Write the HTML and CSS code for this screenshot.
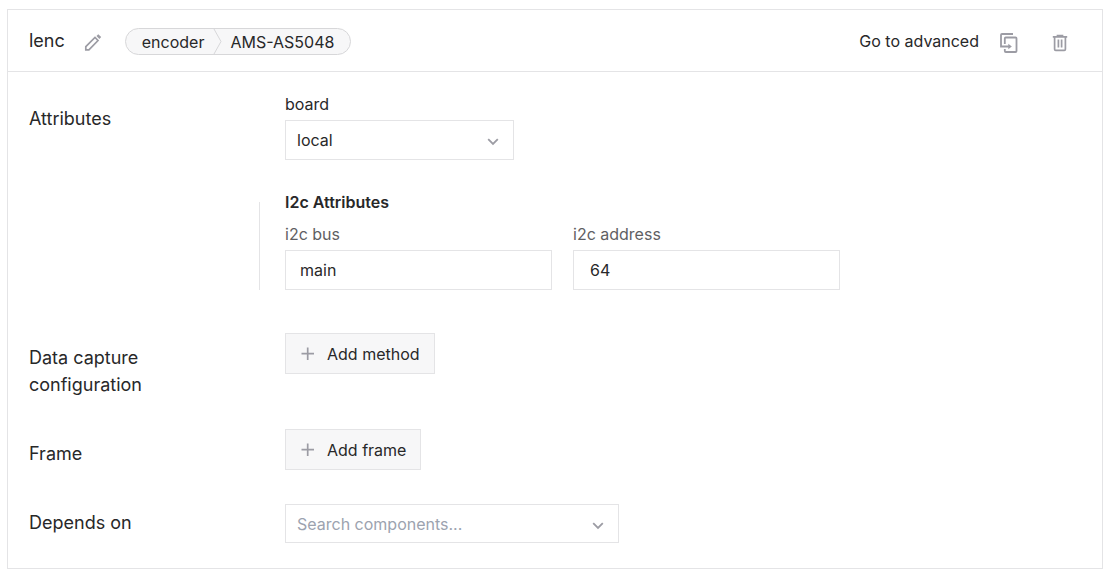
FILE: index.html
```html
<!DOCTYPE html>
<html lang="en">
<head>
<meta charset="utf-8">
<meta name="viewport" content="width=device-width, initial-scale=1">
<title>lenc</title>
<link rel="stylesheet" href="styles.css">
</head>
<body>
<main class="card">
  <header class="card-header">
    <h1 class="name">lenc</h1>
    <button class="icon-button edit" type="button" aria-label="Rename">
      <svg width="18" height="18" viewBox="0 0 18 18" fill="none" stroke="currentColor" stroke-width="1.700"><path d="M1.800 16.800V13.600L11 4.500L14 7.500L4.900 16.800Z"/><path d="M12.500 3L14.300 1.200L17.200 4.100L15.400 5.900Z" fill="currentColor" stroke="none"/></svg>
    </button>
    <div class="type">
      <span class="type-name">encoder</span>
      <svg class="type-divider" width="9" height="25" viewBox="0 0 9 25" fill="none" stroke="currentColor"><path d="M1 0L8 12.500L1 25"/></svg>
      <span class="type-model">AMS-AS5048</span>
    </div>
    <div class="actions">
      <button class="text-button" type="button">Go to advanced</button>
      <button class="icon-button" type="button" aria-label="Duplicate">
        <svg width="20" height="22" viewBox="0 0 20 22" fill="none" stroke="currentColor" stroke-width="1.800"><path d="M14 2H3Q2 2 2 3V14.500H10"/><path d="M5.800 12V6.500Q5.800 5.500 6.800 5.500H16.500Q17.500 5.500 17.500 6.500V19Q17.500 20 16.500 20H6.800Q5.800 20 5.800 19V17"/><path d="M9.300 11.700L12.800 14.500L9.300 17.300Z" fill="currentColor" stroke="none"/></svg>
      </button>
      <button class="icon-button delete" type="button" aria-label="Delete">
        <svg width="16" height="18" viewBox="0 0 16 18" fill="none" stroke="currentColor" stroke-width="1.700"><path d="M.8 2.800H15.200M5.500 2.200V1.500H10.500V2.200M2.600 3V15.300Q2.600 16.400 3.700 16.400H12.300Q13.400 16.400 13.400 15.300V3M6.400 5.500V13.500M9.600 5.500V13.500"/></svg>
      </button>
    </div>
  </header>
  <div class="card-body">
    <section class="row row-attributes">
      <h2 class="row-label">Attributes</h2>
      <div class="row-content">
        <div class="field">
          <label for="board">board</label>
          <div class="picker picker-board">
            <select class="control" id="board"><option>local</option></select>
            <svg class="chevron" width="12" height="8" viewBox="0 0 12 8" fill="none" stroke="currentColor" stroke-width="1.800"><path d="M1.200 1.200L6 6L10.800 1.200"/></svg>
          </div>
        </div>
        <div class="group">
          <h3 class="group-title">I2c Attributes</h3>
          <div class="group-fields">
            <div class="field muted">
              <label for="bus">i2c bus</label>
              <input class="control text" id="bus" type="text" value="main">
            </div>
            <div class="field muted">
              <label for="address">i2c address</label>
              <input class="control number" id="address" type="text" inputmode="numeric" value="64">
            </div>
          </div>
        </div>
      </div>
    </section>
    <section class="row row-capture">
      <h2 class="row-label">Data capture configuration</h2>
      <div class="row-content">
        <button class="add-button" type="button"><svg width="14" height="14" viewBox="0 0 14 14" fill="none" stroke="currentColor" stroke-width="1.700"><path d="M6.700 .5V13M.5 6.700H13"/></svg>Add method</button>
      </div>
    </section>
    <section class="row row-frame">
      <h2 class="row-label">Frame</h2>
      <div class="row-content">
        <button class="add-button" type="button"><svg width="14" height="14" viewBox="0 0 14 14" fill="none" stroke="currentColor" stroke-width="1.700"><path d="M6.700 .5V13M.5 6.700H13"/></svg>Add frame</button>
      </div>
    </section>
    <section class="row row-depends">
      <h2 class="row-label"><label for="depends">Depends on</label></h2>
      <div class="row-content">
        <div class="picker picker-search">
          <input class="control" id="depends" type="text" placeholder="Search components...">
          <svg class="chevron" width="12" height="8" viewBox="0 0 12 8" fill="none" stroke="currentColor" stroke-width="1.800"><path d="M1.200 1.200L6 6L10.800 1.200"/></svg>
        </div>
      </div>
    </section>
  </div>
</main>
</body>
</html>
```
FILE: styles.css
```css
* {
  box-sizing: border-box;
}

body {
  margin: 0;
  padding: 9px 8px 8px 7px;
  background: #fff;
  color: #282829;
  font: 16px/24px Inter, "Liberation Sans", sans-serif;
}

h1, h2, h3 {
  margin: 0;
  font-weight: 400;
}

button, input, select {
  margin: 0;
  color: inherit;
  font: inherit;
}

svg {
  display: block;
  flex: none;
}

.card {
  border: 1px solid #e4e4e6;
}

.card-header {
  display: flex;
  align-items: center;
  min-height: 62px;
  padding: 0 34px 0 21px;
  border-bottom: 1px solid #e4e4e6;
}

.name {
  font-size: 18px;
  line-height: 27px;
}

.icon-button, .text-button {
  padding: 0;
  border: 0;
  background: none;
  cursor: pointer;
}

.icon-button {
  color: #9c9ca4;
}

.edit {
  margin: 2px 23px 0 19px;
}

.type {
  display: flex;
  align-items: center;
  height: 27px;
  margin-top: 2px;
  padding: 0 16px;
  border: 1px solid #d7d7d9;
  border-radius: 14px;
  background: #f7f7f8;
}

.type-divider {
  margin: 0 8px 0 9px;
  color: #d7d7d9;
}

.actions {
  display: flex;
  align-items: center;
  margin-left: auto;
}

.actions .icon-button {
  margin: 4px 0 0 20px;
}

.actions .delete {
  margin-left: 33px;
}

.card-body {
  padding: 20px 21px 25px;
}

.row {
  display: flex;
  align-items: flex-start;
}

.row-label {
  flex: none;
  width: 136px;
  margin-right: 120px;
  padding-top: 11px;
  font-size: 18px;
  line-height: 27px;
}

.row-content {
  flex: 1;
  min-width: 0;
}

.row-attributes {
  margin-bottom: 43px;
}

.row-attributes .row-label {
  padding-top: 13px;
}

.row-capture {
  margin-bottom: 31px;
}

.row-frame {
  margin-bottom: 34px;
}

.row-depends .row-label {
  padding-top: 5px;
}

.field {
  display: flex;
  flex-direction: column;
  gap: 4px;
}

.muted label {
  color: #5f5f63;
}

.control {
  width: 100%;
  height: 40px;
  padding: 0 11px;
  border: 1px solid #e4e4e6;
  border-radius: 0;
  background: #fff;
  appearance: none;
}

.control.text {
  padding: 0 14px;
}

.control.number {
  padding: 0 16px;
}

.control::placeholder {
  color: #9ca3af;
  opacity: 1;
}

.picker {
  position: relative;
}

.picker-board {
  max-width: 229px;
}

.picker-search {
  max-width: 334px;
}

.picker-search .control {
  display: block;
  height: 39px;
}

.chevron {
  position: absolute;
  top: 18px;
  right: 15px;
  color: #9c9ca4;
  pointer-events: none;
}

.group {
  display: flex;
  flex-direction: column;
  margin: 42px 0 0 -26px;
  padding-left: 25px;
  border-left: 1px solid #e4e4e6;
}

.group-title {
  margin: -12px 0 8px;
  font-size: 16px;
  font-weight: 600;
  line-height: 24px;
}

.group-fields {
  display: flex;
  gap: 21px;
}

.group-fields .field {
  flex: 0 1 267px;
}

.add-button {
  display: flex;
  align-items: center;
  gap: 12px;
  height: 41px;
  padding: 0 14px 0 15px;
  border: 1px solid #e4e4e6;
  background: #f7f7f8;
  cursor: pointer;
}

.add-button svg {
  color: #9c9ca4;
}
```
